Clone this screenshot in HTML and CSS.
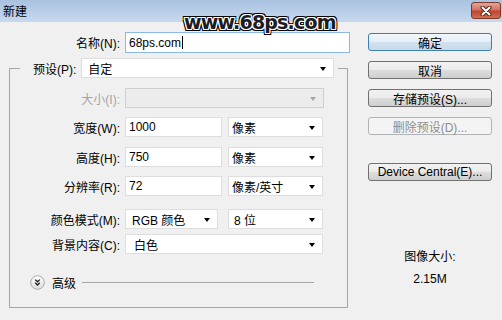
FILE: index.html
```html
<!DOCTYPE html>
<html lang="zh-CN">
<head>
    <meta charset="UTF-8">
    <meta name="viewport" content="width=device-width, initial-scale=1.0">
    <title>新建</title>
    <link rel="stylesheet" href="styles.css">
</head>
<body>
    <div class="titlebar">
        <span class="title">新建</span>
        <div class="close">
            <svg width="12" height="10" viewBox="0 0 12 10">
                <path d="M2.5 1.5 L9.5 8.5 M9.5 1.5 L2.5 8.5" stroke="#5a2418" stroke-width="4" stroke-linecap="round"/>
                <path d="M2.5 1.5 L9.5 8.5 M9.5 1.5 L2.5 8.5" stroke="#fff" stroke-width="2" stroke-linecap="round"/>
            </svg>
        </div>
    </div>
    <div class="watermark">www.68ps.com</div>

    <div class="dialog">
        <div class="main">
            <div class="name-row">
                <label class="label">名称(N):</label>
                <div class="textbox name-box">68ps.com<span class="caret"></span></div>
            </div>

            <fieldset class="group">
                <legend>
                    <div class="preset">
                        <label class="label">预设(P):</label>
                        <div class="select preset-select">自定</div>
                    </div>
                </legend>

                <div class="frow size-row">
                    <label class="label disabled">大小(I):</label>
                    <div class="select wide disabled-select"></div>
                </div>
                <div class="frow width-row">
                    <label class="label">宽度(W):</label>
                    <div class="textbox num">1000</div>
                    <div class="select unit">像素</div>
                </div>
                <div class="frow height-row">
                    <label class="label">高度(H):</label>
                    <div class="textbox num">750</div>
                    <div class="select unit">像素</div>
                </div>
                <div class="frow res-row">
                    <label class="label">分辨率(R):</label>
                    <div class="textbox num">72</div>
                    <div class="select unit">像素/英寸</div>
                </div>
                <div class="frow mode-row">
                    <label class="label">颜色模式(M):</label>
                    <div class="select mode">RGB 颜色</div>
                    <div class="select unit bits">8 位</div>
                </div>
                <div class="frow bg-row">
                    <label class="label">背景内容(C):</label>
                    <div class="select wide bg">白色</div>
                </div>

                <div class="advanced">
                    <svg class="expander" width="15" height="15" viewBox="0 0 15 15">
                        <defs>
                            <linearGradient id="exp" x1="0" y1="0" x2="0" y2="1">
                                <stop offset="0" stop-color="#ffffff"/>
                                <stop offset="1" stop-color="#dcdcdc"/>
                            </linearGradient>
                        </defs>
                        <circle cx="7.5" cy="7.5" r="6.8" fill="url(#exp)" stroke="#a8a8a8"/>
                        <path d="M5.2 4.6 L7.5 6.8 L9.8 4.6 M5.2 7.8 L7.5 10 L9.8 7.8" fill="none" stroke="#1e1e1e" stroke-width="1.3"/>
                    </svg>
                    <span class="adv-text">高级</span>
                    <div class="adv-line"></div>
                </div>
            </fieldset>
        </div>

        <div class="side">
            <button class="btn default">确定</button>
            <button class="btn">取消</button>
            <button class="btn">存储预设(S)...</button>
            <button class="btn" disabled>删除预设(D)...</button>
            <button class="btn device">Device Central(E)...</button>
            <div class="info-label">图像大小:</div>
            <div class="info-value">2.15M</div>
        </div>
    </div>
</body>
</html>
```

FILE: styles.css
```css
* {
    box-sizing: border-box;
}
body {
    margin: 0;
    width: 502px;
    height: 320px;
    overflow: hidden;
    position: relative;
    background-color: #f0f0f0;
    font-family: "Liberation Sans", "Noto Sans CJK SC", sans-serif;
    font-size: 12px;
    color: #000;
}

/* title bar */
.titlebar {
    height: 22px;
    display: flex;
    align-items: center;
    justify-content: space-between;
    padding-left: 3px;
    background: linear-gradient(#a9c2e0, #c7d9ee);
}
.title {
    margin-top: -2px;
}
.close {
    width: 30px;
    height: 17px;
    margin-right: 1px;
    margin-top: -1px;
    border: 1px solid #7a3a2e;
    border-radius: 3px;
    background: linear-gradient(#e3a597 0%, #d2705f 48%, #c2432d 52%, #cf6d50 100%);
    display: flex;
    align-items: center;
    justify-content: center;
}
.watermark {
    position: absolute;
    left: 184px;
    top: 11px;
    font-family: "DejaVu Sans", sans-serif;
    font-weight: bold;
    font-size: 19px;
    letter-spacing: -0.8px;
    color: #1c1c24;
    text-shadow:
        1px 0 0 #fff, -1px 0 0 #fff, 0 1px 0 #fff, 0 -1px 0 #fff,
        1px 1px 0 #fff, -1px -1px 0 #fff, 1px -1px 0 #fff, -1px 1px 0 #fff,
        2px 0 0 #000, -2px 0 0 #000, 0 2px 0 #000, 0 -2px 0 #000,
        2px 2px 0 #000, -2px -2px 0 #000, 2px -2px 0 #000, -2px 2px 0 #000;
}

/* layout */
.dialog {
    display: flex;
}
.main {
    width: 355px;
    padding-top: 10px;
}
.side {
    width: 124px;
    margin-left: 13px;
    padding-top: 11px;
    display: flex;
    flex-direction: column;
}

/* fields */
.label {
    text-align: right;
    white-space: nowrap;
}
.label.disabled {
    color: #a3a3a3;
}
.textbox,
.select {
    height: 20px;
    background-color: #fff;
    border: 1px solid #dedede;
    display: flex;
    align-items: center;
    white-space: nowrap;
}
.textbox {
    padding-left: 3px;
}
.select {
    position: relative;
    padding-left: 6px;
}
.select::after {
    content: "";
    position: absolute;
    right: 7px;
    top: 50%;
    margin-top: -1px;
    border-left: 3.5px solid transparent;
    border-right: 3.5px solid transparent;
    border-top: 4px solid #000;
}
.disabled-select {
    background-color: #ececec;
    border-color: #cfcfcf;
}
.disabled-select::after {
    border-top-color: #a8a8a8;
}

.name-row {
    display: flex;
    align-items: center;
}
.name-row .label {
    width: 120px;
}
.name-box {
    margin-left: 5px;
    width: 225px;
    height: 21px;
    border-color: #8bb9e6;
}
.caret {
    width: 1px;
    height: 13px;
    margin-left: 1px;
    background-color: #000;
}

/* group box */
.group {
    margin: 5px 0 0 9px;
    width: 339px;
    padding: 10px 0 17px 0;
    border: 1px solid #a6a6a6;
    min-width: 0;
}
.group legend {
    margin-left: 10px;
    padding: 0 4px 0 13px;
}
.preset {
    display: flex;
    align-items: center;
}
.preset .label {
    margin-right: 5px;
}
.preset-select {
    width: 253px;
}

.frow {
    display: flex;
    align-items: center;
    height: 20px;
}
.frow .label {
    width: 110px;
    margin-right: 5px;
}
.wide {
    width: 199px;
}
.num {
    width: 97px;
}
.unit {
    width: 95px;
    margin-left: 6px;
    padding-left: 3px;
}
.mode {
    width: 93px;
}
.bits {
    margin-left: 10px;
    padding-left: 5px;
}
.bg {
    width: 198px;
    padding-left: 8px;
}
.width-row {
    margin-top: 9px;
}
.height-row {
    margin-top: 10px;
}
.res-row {
    margin-top: 9px;
}
.mode-row {
    margin-top: 13px;
}
.bg-row {
    margin-top: 5px;
}

.advanced {
    display: flex;
    align-items: center;
    height: 16px;
    margin-top: 20px;
    padding-left: 20px;
}
.adv-text {
    margin-left: 7px;
}
.adv-line {
    width: 232px;
    height: 1px;
    margin-left: 6px;
    background-color: #a6a6a6;
}

/* buttons */
.btn {
    height: 18px;
    margin: 0 0 10px 0;
    padding: 0;
    font-family: inherit;
    font-size: 12px;
    color: #000;
    border: 1px solid #707070;
    border-radius: 3px;
    background: linear-gradient(#f2f2f2 0%, #ebebeb 50%, #dddddd 51%, #cfcfcf 100%);
}
.btn.default {
    border-color: #3c7fb1;
    background: linear-gradient(#f0f6fb 0%, #e4eef7 50%, #d3e1ee 51%, #c8d9e8 100%);
}
.btn:disabled {
    color: #8d8d8d;
    border-color: #b0b4b7;
    background: #f4f4f4;
}
.btn.device {
    margin-top: 18px;
}
.info-label {
    margin-top: 58px;
    text-align: center;
    line-height: 16px;
}
.info-value {
    margin-top: 6px;
    text-align: center;
    line-height: 16px;
}
```
